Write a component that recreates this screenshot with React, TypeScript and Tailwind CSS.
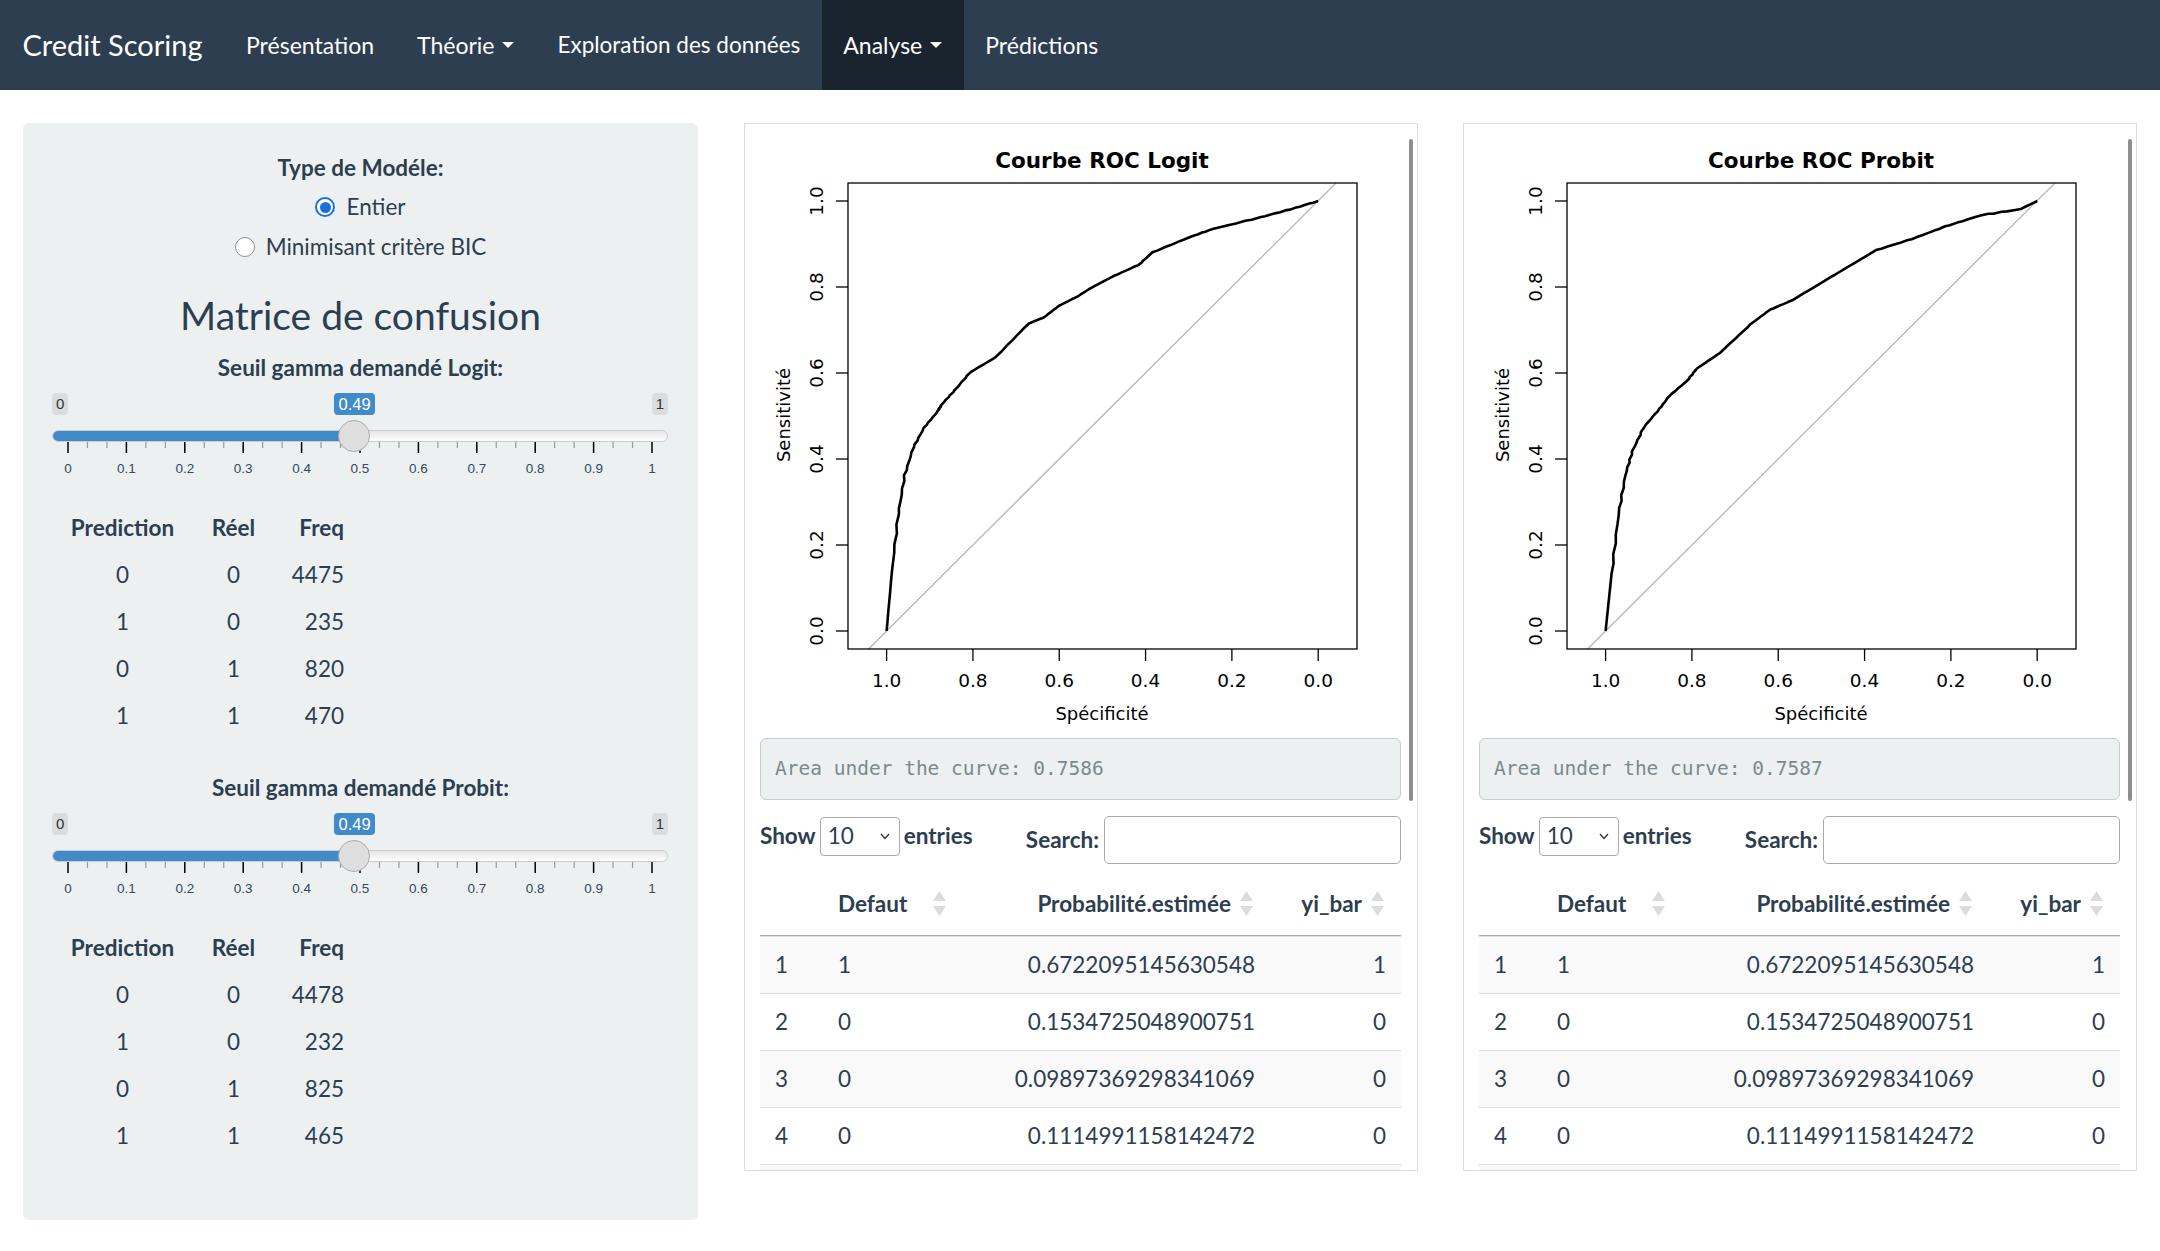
import React from "react";

type Pt = [number, number];

const logitPts: Pt[] = [
  [1, 0], [0.988, 0.135], [0.973, 0.271], [0.958, 0.363], [0.938, 0.427], [0.913, 0.473],
  [0.883, 0.509], [0.872, 0.527], [0.842, 0.56], [0.807, 0.601], [0.747, 0.637], [0.671, 0.715],
  [0.636, 0.729], [0.601, 0.756], [0.556, 0.779], [0.526, 0.798], [0.475, 0.825], [0.415, 0.852],
  [0.385, 0.88], [0.295, 0.917], [0.244, 0.935], [0.134, 0.962], [0.063, 0.981], [0, 1],
];

const probitPts: Pt[] = [
  [1, 0], [0.986, 0.134], [0.97, 0.271], [0.954, 0.363], [0.938, 0.418], [0.912, 0.473],
  [0.874, 0.518], [0.853, 0.546], [0.811, 0.582], [0.789, 0.61], [0.736, 0.646], [0.662, 0.715],
  [0.619, 0.747], [0.566, 0.77], [0.513, 0.802], [0.46, 0.834], [0.406, 0.866], [0.375, 0.885],
  [0.289, 0.912], [0.215, 0.94], [0.13, 0.967], [0.039, 0.981], [0, 1],
];

// plot coordinates inside the 641x600 plot image
const X = (s: number) => 126.6 + (1 - s) * 431.6;
const Y = (v: number) => 501 - v * 430;

function rocPath(pts: Pt[], seed: number) {
  let d = `M${X(pts[0][0]).toFixed(1)},${Y(pts[0][1]).toFixed(1)}`;
  let k = 0;
  for (let i = 0; i < pts.length - 1; i++) {
    const [s0, v0] = pts[i];
    const [s1, v1] = pts[i + 1];
    const n = 6;
    for (let j = 1; j <= n; j++) {
      const t = j / n;
      const x = X(s0 + (s1 - s0) * t);
      const y = Y(v0 + (v1 - v0) * t);
      const last = i === pts.length - 2 && j === n;
      const jit = last || i === 0 ? 0 : Math.sin((k + seed) * 2.7) * 0.8;
      d += ` L${(x + jit).toFixed(1)},${(y - jit * 0.6).toFixed(1)}`;
      k++;
    }
  }
  return d;
}

function RocPlot({ title, pts, seed }: { title: string; pts: Pt[]; seed: number }) {
  const ticks = [1, 0.8, 0.6, 0.4, 0.2, 0];
  const yticks = [0, 0.2, 0.4, 0.6, 0.8, 1];
  return (
    <svg width="641" height="600" className="block" fontFamily="'DejaVu Sans', sans-serif">
      <text x="342" y="37.5" textAnchor="middle" fontSize="21.5" fontWeight="bold" fill="#000">
        {title}
      </text>
      <line x1="108.6" y1="519" x2="576" y2="53" stroke="#b5b5b5" strokeWidth="1.3" />
      <rect x="88" y="53" width="509" height="466" fill="none" stroke="#000" strokeWidth="1.3" />
      {ticks.map((t) => (
        <g key={t}>
          <line x1={X(t)} y1="519" x2={X(t)} y2="531" stroke="#000" strokeWidth="1.3" />
          <text x={X(t)} y="557" textAnchor="middle" fontSize="18.5" fill="#000">
            {t.toFixed(1)}
          </text>
        </g>
      ))}
      {yticks.map((t) => (
        <g key={t}>
          <line x1="76" y1={Y(t)} x2="88" y2={Y(t)} stroke="#000" strokeWidth="1.3" />
          <text
            x="56"
            y={Y(t)}
            textAnchor="middle"
            dominantBaseline="central"
            fontSize="18.5"
            fill="#000"
            transform={`rotate(-90 56 ${Y(t)})`}
          >
            {t.toFixed(1)}
          </text>
        </g>
      ))}
      <text x="342" y="590" textAnchor="middle" fontSize="18" fill="#000">
        Spécificité
      </text>
      <text
        x="23"
        y="285"
        textAnchor="middle"
        dominantBaseline="central"
        fontSize="18"
        fill="#000"
        transform="rotate(-90 23 285)"
      >
        Sensitivité
      </text>
      <path d={rocPath(pts, seed)} fill="none" stroke="#000" strokeWidth="2.6" strokeLinejoin="round" />
    </svg>
  );
}

function SortIcon() {
  return (
    <svg width="13" height="26" viewBox="0 0 13 26" className="shrink-0">
      <polygon points="6.5,0 13,10 0,10" fill="#dcdcdc" />
      <polygon points="0,15 13,15 6.5,25" fill="#dcdcdc" />
    </svg>
  );
}

const dtRows = [
  ["1", "1", "0.6722095145630548", "1"],
  ["2", "0", "0.1534725048900751", "0"],
  ["3", "0", "0.09897369298341069", "0"],
  ["4", "0", "0.1114991158142472", "0"],
];

function PlotPanel({ title, pts, seed, auc }: { title: string; pts: Pt[]; seed: number; auc: string }) {
  return (
    <div className="flex h-[1048px] w-[674px] overflow-hidden border border-[#dddddd] bg-white">
      <div className="w-[656px] shrink-0 pl-[15px] pt-[6px]">
        <RocPlot title={title} pts={pts} seed={seed} />
        <div className="mt-[8px] flex h-[62px] w-[641px] items-center rounded-[6px] border border-[#cccccc] bg-[#ecf0f1] px-[14px] font-['DejaVu_Sans_Mono',monospace] text-[19.5px] text-[#7b8a8b]">
          Area under the curve: {auc}
        </div>
        <div className="mt-[16px] flex w-[641px] items-start justify-between">
          <div className="flex h-[40px] items-center gap-[4px] text-[22.5px] font-bold">
            <span>Show</span>
            <div className="flex h-[39px] w-[80px] items-center justify-between rounded-[4px] border border-[#a9a9a9] bg-white pl-[7px] pr-[9px] font-normal">
              <span>10</span>
              <svg width="10" height="7" viewBox="0 0 10 7">
                <polyline points="1,1 5,5.5 9,1" fill="none" stroke="#333" strokeWidth="1.3" />
              </svg>
            </div>
            <span>entries</span>
          </div>
          <div className="flex h-[48px] items-center gap-[5px] text-[22.5px] font-bold">
            <span>Search:</span>
            <div className="h-[48px] w-[297px] rounded-[5px] border border-[#a9a9a9] bg-white" />
          </div>
        </div>
        <div className="mt-[8px] w-[641px] text-[22.5px]">
          <div className="grid h-[64px] grid-cols-[63px_140px_307px_131px] border-b-[1.5px] border-[#aaaaaa] font-bold">
            <div />
            <div className="flex items-center justify-between pl-[15px] pr-[17px]">
              <span>Defaut</span>
              <SortIcon />
            </div>
            <div className="flex items-center justify-end gap-[9px] pr-[17px]">
              <span>Probabilité.estimée</span>
              <SortIcon />
            </div>
            <div className="flex items-center justify-end gap-[9px] pr-[17px]">
              <span>yi_bar</span>
              <SortIcon />
            </div>
          </div>
          {dtRows.map((r, i) => (
            <div
              key={r[0]}
              className={`grid h-[57px] grid-cols-[63px_140px_307px_131px] items-center border-t border-[#dddddd] ${
                i % 2 === 0 ? "bg-[#f9f9f9]" : "bg-white"
              }`}
            >
              <div className="pl-[15px]">{r[0]}</div>
              <div className="pl-[15px]">{r[1]}</div>
              <div className="pr-[15px] text-right">{r[2]}</div>
              <div className="pr-[15px] text-right">{r[3]}</div>
            </div>
          ))}
          <div className="h-[57px] border-t border-[#dddddd] bg-[#f9f9f9]" />
        </div>
      </div>
      <div className="w-[16px] shrink-0 pt-[15px] pl-[8px]">
        <div className="h-[662px] w-[4px] rounded-[2px] bg-[#8e8e8e]" />
      </div>
    </div>
  );
}

function Slider() {
  const pos = (v: number) => 16 + v * 584;
  const steps = Array.from({ length: 31 }, (_, i) => i);
  return (
    <div className="relative h-[96px] w-[616px] font-['Liberation_Sans',Arial,sans-serif]">
      <div className="flex h-[31px] items-start justify-between pt-[9px]">
        <span className="h-[22px] rounded-[4px] bg-[#dadcdd] px-[4px] text-[15px] leading-[22px] text-[#333]">0</span>
        <span className="h-[22px] rounded-[4px] bg-[#dadcdd] px-[4px] text-[15px] leading-[22px] text-[#333]">1</span>
      </div>
      <span className="absolute left-[282px] top-[9px] h-[22px] rounded-[4px] bg-[#428bca] px-[4.5px] text-[16.5px] leading-[22px] text-white">
        0.49
      </span>
      <div className="mt-[15px] h-[12px] overflow-hidden rounded-full border border-[#cccccc] bg-gradient-to-b from-[#e6e6e6] to-white">
        <div className="h-full w-[301px] bg-[#428bca]" />
      </div>
      <span className="absolute left-[286px] top-[36px] h-[32px] w-[32px] rounded-full border border-[#ababab] bg-[#dedede]" />
      <svg width="616" height="38" className="block">
        {steps.map((i) =>
          i % 3 === 0 ? (
            <line key={i} x1={pos(i / 30)} y1="0" x2={pos(i / 30)} y2="11" stroke="#000" strokeWidth="1.5" />
          ) : (
            <line key={i} x1={pos(i / 30)} y1="0" x2={pos(i / 30)} y2="6" stroke="#9a9a9a" strokeWidth="1.2" />
          )
        )}
        {steps
          .filter((i) => i % 3 === 0)
          .map((i) => (
            <text key={i} x={pos(i / 30)} y="31" textAnchor="middle" fontSize="13.5" fill="#34495e">
              {i === 0 ? "0" : i === 30 ? "1" : (i / 30).toFixed(1)}
            </text>
          ))}
      </svg>
    </div>
  );
}

function ConfTable({ rows }: { rows: number[][] }) {
  return (
    <div className="mt-[24px] grid grid-cols-[141px_81px_70px] text-[22.5px]">
      <div className="h-[47px] text-center font-bold leading-[47px]">Prediction</div>
      <div className="h-[47px] text-center font-bold leading-[47px]">Réel</div>
      <div className="h-[47px] text-right font-bold leading-[47px]">Freq</div>
      {rows.map((r, i) => (
        <React.Fragment key={i}>
          <div className="h-[47px] text-center leading-[47px]">{r[0]}</div>
          <div className="h-[47px] text-center leading-[47px]">{r[1]}</div>
          <div className="h-[47px] text-right leading-[47px]">{r[2]}</div>
        </React.Fragment>
      ))}
    </div>
  );
}

function Radio({ label, checked }: { label: string; checked?: boolean }) {
  return (
    <div className="flex h-[40px] items-center justify-center gap-[11px]">
      {checked ? (
        <span className="flex h-[20px] w-[20px] items-center justify-center rounded-full border-[2px] border-[#1a6fe0] bg-white">
          <span className="h-[11px] w-[11px] rounded-full bg-[#1a6fe0]" />
        </span>
      ) : (
        <span className="h-[20px] w-[20px] rounded-full border border-[#8f8f8f] bg-white" />
      )}
      <span className="text-[22.5px]">{label}</span>
    </div>
  );
}

function Caret() {
  return <span className="ml-[8px] inline-block border-x-[6px] border-t-[6px] border-x-transparent border-t-white" />;
}

export default function App() {
  return (
    <div className="min-h-screen bg-white font-['Lato',sans-serif] text-[#2c3e50]">
      <nav className="flex h-[90px] bg-[#2c3e50] text-white">
        <div className="flex items-center pl-[22.5px] pr-[22px] text-[29px]">Credit Scoring</div>
        <div className="flex items-center px-[21.5px] text-[23px]">Présentation</div>
        <div className="flex items-center px-[21.5px] text-[23px]">
          Théorie
          <Caret />
        </div>
        <div className="flex items-center px-[21.5px] text-[22.5px]">Exploration des données</div>
        <div className="flex items-center bg-[#1a242f] px-[21.5px] text-[23px]">
          Analyse
          <Caret />
        </div>
        <div className="flex items-center px-[21.5px] text-[23px]">Prédictions</div>
      </nav>

      <div className="flex items-start px-[23px] pt-[33px]">
        <aside className="h-[1097px] w-[675px] shrink-0 rounded-[6px] bg-[#ecf0f1] px-[29px] pt-[29px]">
          <div className="text-center text-[22.5px] font-bold leading-[32px]">Type de Modéle:</div>
          <div className="mt-[3px]">
            <Radio label="Entier" checked />
            <Radio label="Minimisant critère BIC" />
          </div>
          <h3 className="mt-[27px] text-center text-[39px] leading-[43px]">Matrice de confusion</h3>
          <div className="mt-[15px] text-center text-[22.5px] font-bold leading-[32px]">Seuil gamma demandé Logit:</div>
          <Slider />
          <ConfTable rows={[[0, 0, 4475], [1, 0, 235], [0, 1, 820], [1, 1, 470]]} />
          <div className="mt-[32.5px] text-center text-[22.5px] font-bold leading-[32px]">Seuil gamma demandé Probit:</div>
          <Slider />
          <ConfTable rows={[[0, 0, 4478], [1, 0, 232], [0, 1, 825], [1, 1, 465]]} />
        </aside>

        <div className="ml-[46px] shrink-0">
          <PlotPanel title="Courbe ROC Logit" pts={logitPts} seed={1} auc="0.7586" />
        </div>
        <div className="ml-[45px] shrink-0">
          <PlotPanel title="Courbe ROC Probit" pts={probitPts} seed={4} auc="0.7587" />
        </div>
      </div>
    </div>
  );
}
